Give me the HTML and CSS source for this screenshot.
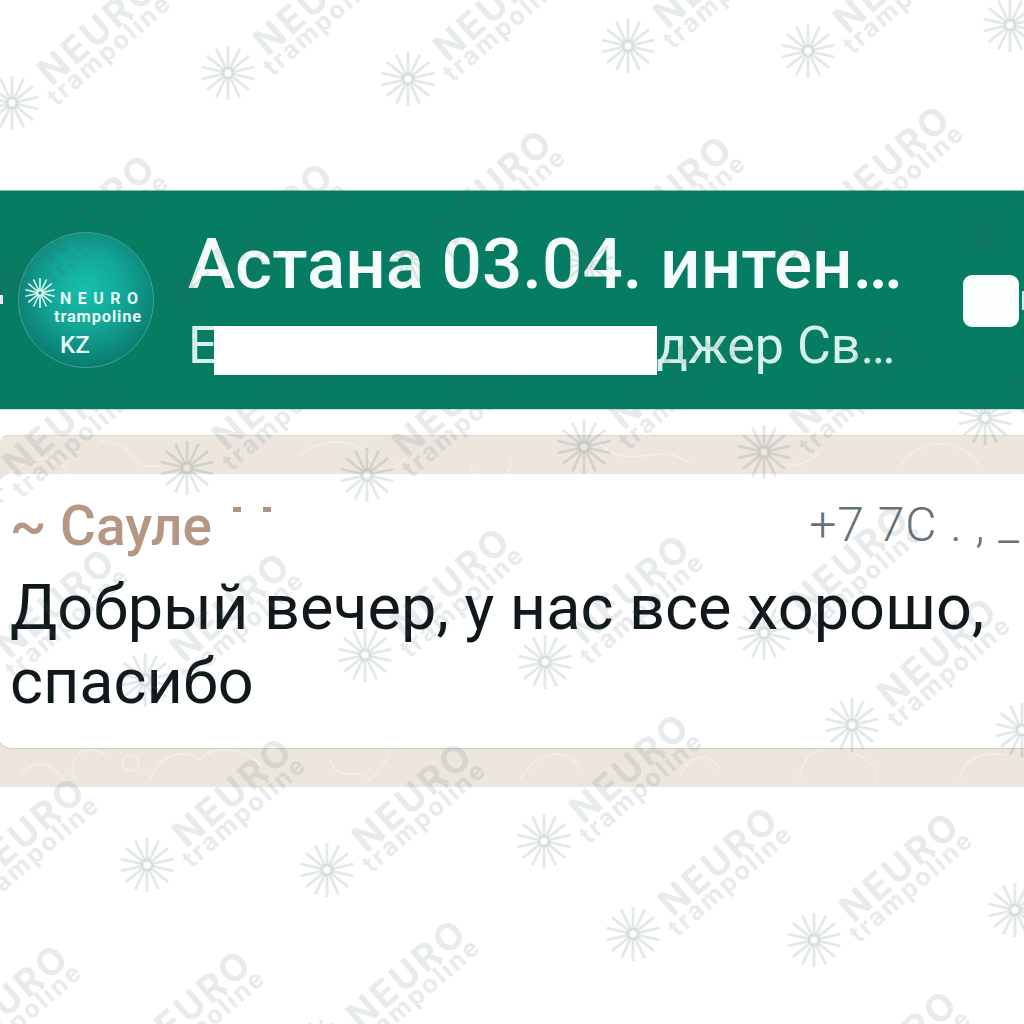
FILE: index.html
```html
<!DOCTYPE html>
<html lang="en">
<head>
    <meta charset="UTF-8">
    <meta name="viewport" content="width=device-width, initial-scale=1.0">
    <title>Астана 03.04. интенсив</title>
    <link rel="stylesheet" href="styles.css">
</head>
<body>
    <div class="page">
        <header class="chat-header">
            <span class="back"></span>
            <div class="avatar">
                <div class="avatar-top">
                    <svg class="avatar-flake" viewBox="-27 -27 54 54"><use href="#flake"></use></svg>
                    <span class="avatar-neuro">NEURO</span>
                </div>
                <span class="avatar-tramp">trampoline</span>
                <span class="avatar-kz">KZ</span>
            </div>
            <div class="chat-info">
                <div class="chat-title">Астана 03.04. интен…</div>
                <div class="chat-sub">
                    <span class="sub-text">Е</span>
                    <span class="redact"></span>
                    <span class="sub-text">джер Св…</span>
                </div>
            </div>
            <div class="camera">
                <span class="camera-body"></span>
                <span class="camera-lens"></span>
            </div>
        </header>

        <section class="chat">
            <svg class="doodles" viewBox="0 0 1024 352" preserveAspectRatio="none">
                <path d="M10 38c30-30 70-10 60 20M100 5c40 0 25 30 60 25M300 20c20-20 60-18 70 2s30 10 40-5M470 30a20 20 0 1 0 40-10M600 8c30 30 60-5 90 20M760 10c10 25 45 25 60 5M900 30c20-30 60-30 80 0"/>
                <path d="M20 340c20-20 30-10 45 5M75 345c-10-20 10-40 30-25M130 320a8 8 0 1 0 1 0M150 345c10-30 40-30 50-20 10-15 45-15 60 5M330 325c10 25 30 5 40 20 10-10 25-30 15-30M520 345c15-30 50-35 60-10M680 340c10-20 30-25 40-5M800 345c0-30 30-40 50-30s30 20 25 30M960 345c0-20 25-30 45-25"/>
            </svg>
            <article class="bubble">
                <div class="bubble-head">
                    <span class="sender">~ Сауле</span>
                    <span class="sender-rest"><i></i><i></i></span>
                    <span class="phone">+7 7C . , _</span>
                </div>
                <p class="message">Добрый вечер, у нас все хорошо, спасибо</p>
            </article>
        </section>

        <div id="watermarks" class="watermarks"></div>
    </div>

    <svg class="defs" width="0" height="0">
        <defs>
            <g id="flake" stroke="currentColor" stroke-width="2.8" fill="none"></g>
        </defs>
    </svg>

    <script src="script.js"></script>
</body>
</html>
```

FILE: styles.css
```css
* {
    box-sizing: border-box;
}
body {
    margin: 0;
    background-color: #fff;
    font-family: Roboto, "Liberation Sans", sans-serif;
}
.page {
    position: relative;
    height: 1024px;
    padding-top: 191px;
    overflow: hidden;
}
.defs {
    position: absolute;
}

/* header */
.chat-header {
    display: flex;
    align-items: center;
    height: 218px;
    background-color: #067c63;
    color: #fff;
    box-shadow: 0 -1px 0 #7fbcae, 0 1px 0 #bfe6dd;
}
.back {
    width: 3px;
    height: 9px;
    margin-right: 15px;
    margin-top: -2px;
    background-color: #fff;
}
.avatar {
    display: flex;
    flex-direction: column;
    align-items: flex-start;
    flex-shrink: 0;
    width: 136px;
    height: 136px;
    padding: 55px 0 0 6px;
    border: 1px solid #3fa595;
    border-radius: 50%;
    background: radial-gradient(circle at 50% 42%, #17c0ac 0%, #12a596 38%, #0b7f73 72%, #0a6f66 100%);
    color: #e4fbf6;
    font-weight: 700;
}
.avatar-top {
    display: flex;
    align-items: center;
}
.avatar-flake {
    width: 30px;
    height: 30px;
    margin-top: -10px;
    color: #e4fbf6;
}
.avatar-neuro {
    margin-left: 5px;
    font-size: 16px;
    letter-spacing: 6.5px;
}
.avatar-tramp {
    margin: 2px 0 0 29px;
    font-size: 16.5px;
    line-height: 14px;
    letter-spacing: 0.8px;
}
.avatar-kz {
    margin: 11px 0 0 35px;
    font-size: 24px;
    line-height: 20px;
    font-weight: 500;
}
.chat-info {
    margin-left: 34px;
    margin-top: 4px;
}
.chat-title {
    font-size: 71px;
    line-height: 70px;
    font-weight: 500;
    color: #f4fdfb;
    white-space: nowrap;
}
.chat-sub {
    display: flex;
    align-items: flex-start;
    height: 49px;
    margin-top: 27px;
    color: #d5f1ea;
    white-space: nowrap;
}
.sub-text {
    margin-top: -6px;
    font-size: 52px;
    line-height: 51px;
}
.redact {
    position: relative;
    z-index: 2;
    width: 443px;
    height: 49px;
    margin-left: -4px;
    background-color: #fff;
}
.camera {
    display: flex;
    align-items: center;
    flex-shrink: 0;
    margin-left: auto;
    margin-top: 1px;
    position: relative;
    z-index: 2;
}
.camera-body {
    width: 56px;
    height: 52px;
    border-radius: 9px;
    background-color: #fcfffe;
}
.camera-lens {
    width: 2px;
    height: 19px;
    margin-left: 3px;
    background-color: #cfeee7;
}

/* chat */
.chat {
    position: relative;
    margin-top: 26px;
    padding: 39px 0;
    background-color: #ece6de;
    border-top: 1px solid #e0d9cf;
    border-radius: 8px 0 0 0;
}
.doodles {
    position: absolute;
    left: 0;
    top: 0;
    width: 100%;
    height: 100%;
    fill: none;
    stroke: #f4efe9;
    stroke-width: 1.5;
}
.bubble {
    position: relative;
    height: 274px;
    margin: -1px -20px 0 -2px;
    padding: 25px 24px 0 12px;
    border-radius: 14px;
    background-color: #fff;
    box-shadow: 0 1px 1px rgba(0, 0, 0, 0.12);
}
.bubble-head {
    display: flex;
    align-items: flex-start;
    height: 58px;
}
.sender {
    font-size: 55px;
    line-height: 54px;
    font-weight: 500;
    color: #b59784;
}
.sender-rest {
    display: flex;
    gap: 22px;
    margin: 8px 0 0 21px;
}
.sender-rest i {
    width: 8px;
    height: 5px;
    background-color: #a99486;
}
.phone {
    margin-left: auto;
    margin-top: 1px;
    font-size: 48px;
    line-height: 50px;
    font-weight: 300;
    letter-spacing: 1px;
    color: #667276;
    white-space: pre;
}
.message {
    margin: 14px 0 0;
    width: 1000px;
    font-size: 63px;
    line-height: 74px;
    color: #11181c;
}

/* watermark */
.watermarks {
    position: absolute;
    z-index: 1;
    left: 0;
    top: 0;
    width: 1024px;
    height: 1024px;
    overflow: hidden;
    pointer-events: none;
    color: rgba(70, 100, 100, 0.15);
}
.mark {
    position: absolute;
    width: 0;
    height: 0;
}
.mark-flake {
    position: absolute;
    left: -27px;
    top: -27px;
    width: 54px;
    height: 54px;
}
.mark-neuro,
.mark-tramp {
    position: absolute;
    transform: rotate(-41deg);
    transform-origin: 0 100%;
    font-family: Inter, sans-serif;
    font-weight: 700;
    white-space: nowrap;
}
.mark-neuro {
    left: 42px;
    bottom: 13px;
    font-size: 37px;
    line-height: 35px;
    letter-spacing: 3px;
}
.mark-tramp {
    left: 47px;
    bottom: -7px;
    font-size: 25px;
    line-height: 26px;
    letter-spacing: 2.4px;
}
```

FILE: script.js
```js
// flake centres of the watermark, read off the picture
const marks = [
    [12, 103], [228, 73], [408, 79], [628, 46], [808, 51], [1010, 25],
    [10, 282], [188, 290], [407, 257], [587, 263], [805, 233], [985, 237],
    [-23, 495], [187, 468], [367, 475], [584, 447], [764, 452], [985, 418],
    [-30, 676], [145, 680], [365, 655], [545, 662], [764, 633],
    [852, 725], [1022, 730],
    [-60, 905], [147, 865], [327, 870], [544, 841],
    [633, 934], [814, 940], [1015, 910],
    [-77, 1072], [106, 1078], [321, 1047], [812, 1118]
];

// spokes of the flake
let lines = '<circle r="4.5"></circle>';
const spokes = 14;
for (let i = 0; i < spokes; i++) {
    const a = (i + 0.5) * 2 * Math.PI / spokes;
    const x1 = (5 * Math.cos(a)).toFixed(1);
    const y1 = (5 * Math.sin(a)).toFixed(1);
    const x2 = (27 * Math.cos(a)).toFixed(1);
    const y2 = (27 * Math.sin(a)).toFixed(1);
    lines += `<line x1="${x1}" y1="${y1}" x2="${x2}" y2="${y2}"></line>`;
}
document.getElementById('flake').innerHTML = lines;

const layer = document.getElementById('watermarks');
marks.forEach(([x, y]) => {
    const mark = document.createElement('div');
    mark.className = 'mark';
    mark.style.left = x + 'px';
    mark.style.top = y + 'px';
    mark.innerHTML = `
        <svg class="mark-flake" viewBox="-27 -27 54 54"><use href="#flake"></use></svg>
        <span class="mark-neuro">NEURO</span>
        <span class="mark-tramp">trampoline</span>
    `;
    layer.appendChild(mark);
});
```
